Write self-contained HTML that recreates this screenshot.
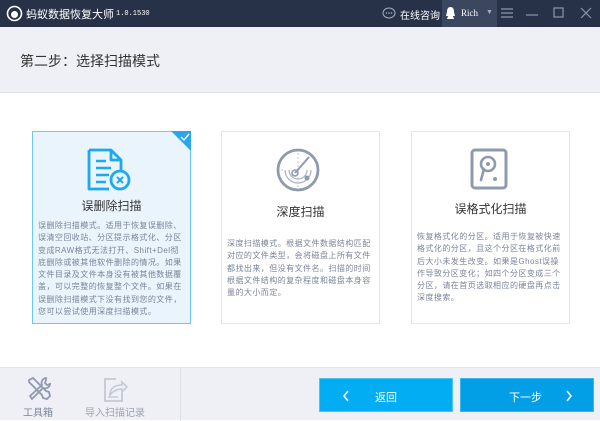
<!DOCTYPE html>
<html><head><meta charset="utf-8"><style>
*{margin:0;padding:0;box-sizing:border-box}
body{width:600px;height:420px;overflow:hidden;font-family:"Liberation Sans","Noto Sans CJK SC",sans-serif;background:#fff;position:relative}
.tb{position:absolute;left:0;top:0;width:600px;height:27px;background:#273249;color:#fff}
.hd{position:absolute;left:0;top:27px;width:600px;height:66px;background:#eff0f6;border-bottom:1px solid #dcdfe6}
.hd span{position:absolute;left:20px;top:24px;font-size:14px;color:#333}
.card{position:absolute;top:131px;width:159px;height:193px;border:1px solid #dfe6f0;background:#fff}
.card h3{position:absolute;left:0;width:100%;text-align:center;font-weight:normal;font-size:12px;color:#333}
.card p{position:absolute;left:5px;width:148px;font-size:8px;letter-spacing:.45px;line-height:12.3px;color:#7a849a;word-break:break-all}
.ft{position:absolute;left:0;top:367px;width:600px;height:53px;background:#eff0f6;border-top:1px solid #e2e4ea}
.btn{position:absolute;top:378px;height:34px;color:#fff;font-size:11px}
</style></head><body>
<div class="tb">
<svg style="position:absolute;left:6px;top:5px" width="17" height="17" viewBox="0 0 17 17"><circle cx="8.5" cy="8.5" r="7" fill="none" stroke="#fff" stroke-width="1.6"/><circle cx="8.5" cy="9.5" r="3.5" fill="#fff"/></svg>
<span style="position:absolute;left:26px;top:6px;font-size:11px;white-space:nowrap">蚂蚁数据恢复大师</span>
<span style="position:absolute;left:116px;top:10px;font-size:7px;white-space:nowrap;font-family:'Liberation Mono',monospace">1.0.1530</span>
<svg style="position:absolute;left:382px;top:7px" width="14" height="13" viewBox="0 0 14 13"><ellipse cx="7" cy="6" rx="6" ry="5" fill="none" stroke="#aab" stroke-width="1"/><circle cx="4.5" cy="6" r=".8" fill="#aab"/><circle cx="7" cy="6" r=".8" fill="#aab"/><circle cx="9.5" cy="6" r=".8" fill="#aab"/></svg>
<span style="position:absolute;left:400px;top:7px;font-size:10px;white-space:nowrap">在线咨询</span>
<div style="position:absolute;left:442px;top:0;width:55px;height:27px;background:#3b475e"></div>
<svg style="position:absolute;left:445px;top:6px" width="11" height="14" viewBox="0 0 11 14"><path d="M5.5 1C2.5 1 2 4 2 6L1 10h2l-1 3h7l-1-3h2L9 6C9 4 8.5 1 5.5 1z" fill="#fff"/></svg>
<span style="position:absolute;left:461px;top:8px;font-size:9px;font-family:'Liberation Serif',serif">Rich</span>
<span style="position:absolute;left:486px;top:9px;font-size:7px;color:#aab">▼</span>
<svg style="position:absolute;left:500px;top:7px" width="14" height="12"><path d="M1 2h12M1 6h12M1 10h12" stroke="#8d97aa" stroke-width="1.2"/></svg>
<svg style="position:absolute;left:525px;top:7px" width="14" height="12"><path d="M1 8h12" stroke="#8d97aa" stroke-width="1.2"/></svg>
<svg style="position:absolute;left:553px;top:7px" width="12" height="12"><rect x="1" y="1" width="9" height="9" fill="none" stroke="#8d97aa" stroke-width="1.2"/></svg>
<svg style="position:absolute;left:580px;top:7px" width="12" height="12"><path d="M1 1l10 10M11 1L1 11" stroke="#8d97aa" stroke-width="1.2"/></svg>
</div>
<div class="hd"><span>第二步：选择扫描模式</span></div>

<div class="card" style="left:32px;background:#eaf4fd;border-color:#6fc5f5">
<svg style="position:absolute;right:-1px;top:-1px" width="20" height="20"><path d="M0 0h20v20z" fill="#2aa7ea"/><path d="M10 6l3 3 5-6" fill="none" stroke="#fff" stroke-width="1.4"/></svg>
<svg style="position:absolute;left:52px;top:16px" width="50" height="45" viewBox="0 0 50 45"><path d="M4 2h22l10 10v12M26 2v10h10M4 2v39h20" fill="none" stroke="#1ea8f0" stroke-width="2.8" stroke-linejoin="round"/><path d="M11 13h10M11 20h15M11 27h13M11 34h10" stroke="#1ea8f0" stroke-width="2.6"/><circle cx="35" cy="32" r="9" fill="#eaf4fd" stroke="#1ea8f0" stroke-width="2.8"/><path d="M32 29l6 6M38 29l-6 6" stroke="#1ea8f0" stroke-width="2"/></svg>
<h3 style="top:65px">误删除扫描</h3>
<p style="top:88px">误删除扫描模式。适用于恢复误删除、误清空回收站、分区提示格式化、分区变成RAW格式无法打开、Shift+Del彻底删除或被其他软件删除的情况。如果文件目录及文件本身没有被其他数据覆盖，可以完整的恢复整个文件。如果在误删除扫描模式下没有找到您的文件，您可以尝试使用深度扫描模式。</p>
</div>

<div class="card" style="left:221px">
<svg style="position:absolute;left:53px;top:15px" width="46" height="46" viewBox="0 0 46 46"><circle cx="23" cy="23" r="20" fill="none" stroke="#8e9ab0" stroke-width="2.8"/><path d="M10 23a13 13 0 0 0 26 0M14 23a9 9 0 0 0 18 0" fill="none" stroke="#a8b2c4" stroke-width="1.2"/><path d="M23 6v34M6 23h4" stroke="#c0c8d6" stroke-width="1" stroke-dasharray="2 2"/><path d="M20 26L34 10" stroke="#8e9ab0" stroke-width="2"/><circle cx="20" cy="26" r="3" fill="none" stroke="#8e9ab0" stroke-width="1.6"/><circle cx="32" cy="31" r="2.5" fill="#8e9ab0"/></svg>
<h3 style="top:71px">深度扫描</h3>
<p style="top:106px">深度扫描模式。根据文件数据结构匹配对应的文件类型，会将磁盘上所有文件都找出来，但没有文件名。扫描的时间根据文件结构的复杂程度和磁盘本身容量的大小而定。</p>
</div>

<div class="card" style="left:411px">
<svg style="position:absolute;left:58px;top:16px" width="38" height="42" viewBox="0 0 38 42"><rect x="2" y="2" width="34" height="38" rx="3" fill="none" stroke="#8e9ab0" stroke-width="3"/><circle cx="18" cy="16" r="7" fill="none" stroke="#8e9ab0" stroke-width="2.6"/><circle cx="18" cy="16" r="2" fill="#8e9ab0"/><path d="M14 21l-3 11" stroke="#8e9ab0" stroke-width="2.6" stroke-linecap="round"/><circle cx="25" cy="31" r="2" fill="#8e9ab0"/></svg>
<h3 style="top:68px">误格式化扫描</h3>
<p style="top:99px">恢复格式化的分区。适用于恢复被快速格式化的分区，且这个分区在格式化前后大小未发生改变。如果是Ghost误操作导致分区变化；如四个分区变成三个分区，请在首页选取相应的硬盘再点击深度搜索。</p>
</div>

<div class="ft">
<div style="position:absolute;left:180px;top:0;width:1px;height:53px;background:#dcdfe6"></div>
<svg style="position:absolute;left:26px;top:8px" width="26" height="26" viewBox="0 0 26 26"><path d="M3 4l4-2 13 13 3 1 1 4-3 3-4-1-1-3L3 6z" fill="none" stroke="#8e9ab0" stroke-width="1.8"/><path d="M20 2a5 5 0 0 0-4 7L4 20l2 3L17 12a5 5 0 0 0 7-4l-3 1-2-2 1-3z" fill="none" stroke="#8e9ab0" stroke-width="1.8"/></svg>
<span style="position:absolute;left:23px;top:36px;font-size:10px;color:#7e8799">工具箱</span>
<svg style="position:absolute;left:102px;top:7px" width="26" height="28" viewBox="0 0 26 28"><path d="M14 4H3v22h17v-8" fill="none" stroke="#c3c9d4" stroke-width="1.8"/><path d="M8 20c0-7 5-10 12-10V7l5 5-5 5v-3c-5 0-9 2-12 6z" fill="none" stroke="#c3c9d4" stroke-width="1.6"/><path d="M6 22h10" stroke="#c3c9d4" stroke-width="1.4"/></svg>
<span style="position:absolute;left:85px;top:36px;font-size:10px;color:#9aa2b1">导入扫描记录</span>
</div>
<div class="btn" style="left:319px;width:134px;background:#03adf3;border:1px solid #4ac5f7">
<svg style="position:absolute;left:22px;top:11px" width="8" height="12"><path d="M6 1L2 6l4 5" fill="none" stroke="#fff" stroke-width="1.5"/></svg><span style="position:absolute;left:55px;top:10px">返回</span></div>
<div class="btn" style="left:460px;width:134px;background:#029ee6;border:1px solid #38b7f0">
<span style="position:absolute;left:48px;top:10px">下一步</span><svg style="position:absolute;left:104px;top:11px" width="8" height="12"><path d="M2 1l4 5-4 5" fill="none" stroke="#fff" stroke-width="1.5"/></svg></div>
</body></html>
